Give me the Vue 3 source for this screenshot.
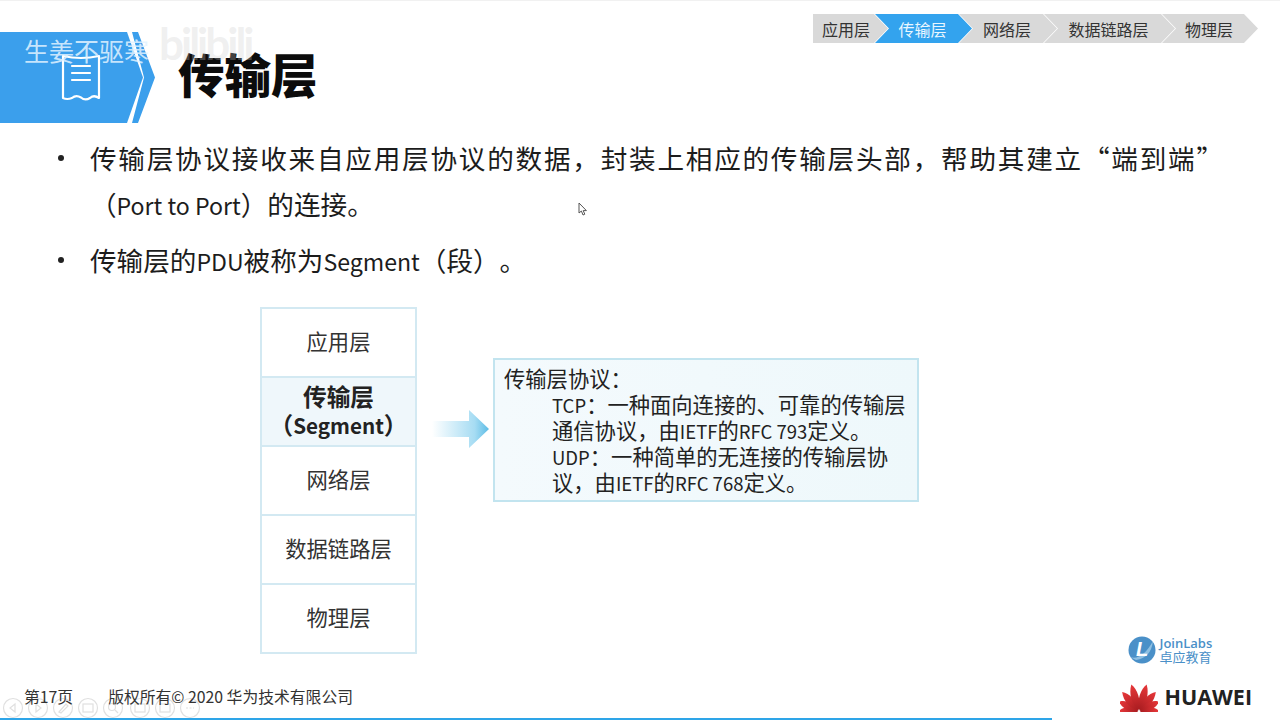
<script setup>
const crumbs = [
  { label: '应用层', w: 75 },
  { label: '传输层', w: 97, active: true },
  { label: '网络层', w: 98 },
  { label: '数据链路层', w: 131 },
  { label: '物理层', w: 96 }
]
const layers = [
  { label: '应用层' },
  { label: '传输层', sub: 'Segment', active: true },
  { label: '网络层' },
  { label: '数据链路层' },
  { label: '物理层' }
]
const petals = [
  { a: -84, s: 0.72 },
  { a: -60, s: 0.8 },
  { a: -37, s: 0.92 },
  { a: -12, s: 1 },
  { a: 12, s: 1 },
  { a: 37, s: 0.92 },
  { a: 60, s: 0.8 },
  { a: 84, s: 0.72 }
]
const controls = [13, 38, 63, 88, 113, 140, 165, 190]
</script>

<template>
  <div class="slide">
    <nav class="crumbs">
      <span
        v-for="(c, i) in crumbs"
        :key="c.label"
        class="crumb"
        :class="{ on: c.active, first: i === 0 }"
        :style="{ width: c.w + 'px', zIndex: 10 - i }"
      >{{ c.label }}</span>
    </nav>

    <header class="head">
      <div class="banner">
        <div class="plate">
          <svg width="40" height="47" viewBox="0 0 40 47" fill="none" stroke="#fff" stroke-width="2.2" stroke-linejoin="round" stroke-linecap="round">
            <path d="M2 2 Q20 6 38 2 V44 Q33 40.5 29 44 Q24 47 20 43.5 Q15 40.5 11 44 Q6 46 2 44 Z" />
            <path d="M11 12H29M11 19H29M11 26H29" />
          </svg>
        </div>
        <div class="stripe"></div>
      </div>
      <h1>传输层</h1>
    </header>
    <span class="mark">生姜不驱寒</span>
    <span class="bili">bilibili</span>

    <ul class="points">
      <li>传输层协议接收来自应用层协议的数据，封装上相应的传输层头部，帮助其建立“端到端”<wbr />（<span class="lat">Port to Port</span>）的连接。</li>
      <li>传输层的<span class="lat">PDU</span>被称为<span class="lat">Segment</span>（段）。</li>
    </ul>

    <section class="diagram">
      <div class="stack">
        <div v-for="l in layers" :key="l.label" class="layer" :class="{ on: l.active }">
          <span>{{ l.label }}</span>
          <span v-if="l.sub" class="sub">（<span class="lat">{{ l.sub }}</span>）</span>
        </div>
      </div>
      <div class="arrow">
        <svg width="58" height="38" viewBox="0 0 58 38">
          <defs>
            <linearGradient id="ag" x1="0" x2="1" y1="0" y2="0">
              <stop offset="0" stop-color="#fff" />
              <stop offset="0.75" stop-color="#a6dcf3" />
              <stop offset="1" stop-color="#5cbce6" />
            </linearGradient>
          </defs>
          <path d="M0 11H37V0L57 19L37 38V27H0Z" fill="url(#ag)" />
        </svg>
      </div>
      <div class="info">
        <p>传输层协议：</p>
        <div class="indent">
          <p><span class="lat">TCP</span>：一种面向连接的、可靠的传输层通信协议，由<span class="lat">IETF</span>的<span class="lat">RFC 793</span>定义。</p>
          <p><span class="lat">UDP</span>：一种简单的无连接的传输层协议，由<span class="lat">IETF</span>的<span class="lat">RFC 768</span>定义。</p>
        </div>
      </div>
    </section>

    <svg class="cursor" width="10" height="14" viewBox="0 0 10 14">
      <path d="M1 1V11L3.4 9L5 13L6.8 12.2L5.2 8.6H8.4Z" fill="#fff" stroke="#555" stroke-width="1" />
    </svg>

    <svg class="controls" width="204" height="24" viewBox="0 0 204 24" fill="none" stroke="#e0e0e0" stroke-width="1.2">
      <circle v-for="x in controls" :key="x" :cx="x" cy="12" r="9.5" />
      <path d="M15 8L10 12L15 16Z" />
      <path d="M36 8L41 12L36 16Z" />
      <path d="M59 16L66 8L68 10L61 17Z" />
      <rect x="83" y="8" width="10" height="8" />
      <circle cx="112" cy="11" r="3.5" />
      <path d="M115 14L118 17" />
      <rect x="135" y="8" width="10" height="8" />
      <rect x="160" y="8" width="10" height="8" />
      <path d="M186 12H194" stroke-dasharray="2 1.5" />
    </svg>

    <footer class="foot">
      <div class="legal">
        <span class="page">第17页</span>
        <span>版权所有© 2020 华为技术有限公司</span>
      </div>
      <div class="logos">
        <div class="join">
          <svg width="28" height="28" viewBox="0 0 28 28">
            <circle cx="14" cy="14" r="13.5" fill="#4a90c8" />
            <path d="M2 21 Q14 25 25 5 Q23 22 8 24Z" fill="#8fc0e2" />
            <text x="14" y="20" text-anchor="middle" class="ltr">L</text>
          </svg>
          <div class="jointxt">
            <b>JoinLabs</b>
            <span>卓应教育</span>
          </div>
        </div>
        <div class="hw">
          <svg width="38" height="30" viewBox="0 0 38 30">
            <defs>
              <linearGradient id="pg" x1="0" x2="0" y1="1" y2="0">
                <stop offset="0" stop-color="#a81c20" />
                <stop offset="1" stop-color="#e8383a" />
              </linearGradient>
            </defs>
            <path
              v-for="p in petals"
              :key="p.a"
              fill="url(#pg)"
              d="M0 -1C-6 -8 -6.5 -19 -2 -27.5C3 -22 4.5 -10 0 -1Z"
              :transform="`translate(19 29) rotate(${p.a}) scale(${p.a < 0 ? 1 : -1} ${p.s}) `"
            />
          </svg>
          <span>HUAWEI</span>
        </div>
      </div>
    </footer>
    <div class="bar"></div>
  </div>
</template>

<style>
html, body { margin: 0; background: #fff; }
</style>

<style scoped>
.slide {
  position: relative;
  width: 1280px;
  height: 720px;
  overflow: hidden;
  background: #fff;
  border-top: 1px solid #f1f1f1;
  box-sizing: border-box;
  color: #1c1c1c;
  font-family: "Noto Sans CJK SC", "Open Sans", sans-serif;
  text-spacing-trim: space-all;
}
.lat {
  font-size: 0.87em;
  line-height: 1;
}
.crumbs {
  display: flex;
  justify-content: flex-end;
  padding: 13px 22px 0 0;
  height: 29px;
}
.crumb {
  position: relative;
  display: flex;
  align-items: center;
  justify-content: center;
  box-sizing: border-box;
  height: 29px;
  margin-left: -13px;
  padding: 0 6px 0 4px;
  font-size: 16px;
  color: #333;
  background: #d9d9d9;
  clip-path: polygon(0 0, calc(100% - 14px) 0, 100% 50%, calc(100% - 14px) 100%, 0 100%, 14px 50%);
}
.crumb.first {
  margin-left: 0;
  padding: 0 9px 0 0;
  clip-path: polygon(0 0, calc(100% - 14px) 0, 100% 50%, calc(100% - 14px) 100%, 0 100%);
}
.crumb.on {
  background: #33a3ee;
  color: #e9f6ff;
}
.head {
  display: flex;
  align-items: center;
  gap: 23px;
  margin-top: -11px;
  height: 91px;
}
.banner {
  display: flex;
  height: 91px;
}
.plate {
  display: flex;
  align-items: flex-start;
  width: 143px;
  box-sizing: border-box;
  padding: 22px 0 0 61px;
  background: #3b9fec;
  clip-path: polygon(0 0, 127px 0, 100% 50%, 127px 100%, 0 100%);
}
.stripe {
  width: 23px;
  margin-left: -11px;
  background: #3b9fec;
  clip-path: polygon(0 0, 6px 0, 100% 50%, 6px 100%, 0 100%, 12px 50%);
}
h1 {
  margin: -10px 0 0;
  font-size: 46.5px;
  line-height: 56px;
  font-weight: 900;
  color: #0c0c0c;
}
.mark {
  position: absolute;
  left: 24px;
  top: 32px;
  font-size: 25px;
  line-height: 34px;
  color: rgba(226, 243, 255, 0.85);
}
.bili {
  position: absolute;
  left: 159px;
  top: 14px;
  font-family: "Lato", sans-serif;
  font-size: 44px;
  line-height: 56px;
  font-weight: 700;
  letter-spacing: -3px;
  color: rgba(205, 205, 205, 0.3);
}
.points {
  margin: 12px 0 0;
  padding: 0 57px 0 90px;
  list-style: none;
  font-size: 26.6px;
  line-height: 46px;
  text-align: justify;
}
.points li {
  position: relative;
  margin-bottom: 10px;
}
.points li::before {
  content: "";
  position: absolute;
  left: -32px;
  top: 20px;
  width: 6px;
  height: 6px;
  border-radius: 50%;
  background: #222;
}
.diagram {
  display: flex;
  align-items: flex-start;
  margin: 24px 0 0 260px;
}
.stack {
  width: 157px;
  box-sizing: border-box;
  border: 2px solid #d3e9f2;
}
.layer {
  display: flex;
  flex-direction: column;
  align-items: center;
  justify-content: center;
  height: 64px;
  padding-bottom: 3px;
  border-top: 2px solid #d3e9f2;
  font-size: 21.3px;
  line-height: 28px;
  color: #333;
}
.layer:first-child {
  border-top: 0;
}
.layer.on {
  background: #eff7fb;
  font-weight: 700;
  font-size: 23.7px;
  color: #222;
}
.sub {
  font-size: 23.7px;
  white-space: nowrap;
}
.arrow {
  display: flex;
  margin: 103px 3px 0 15px;
}
.info {
  width: 426px;
  height: 144px;
  margin-top: 51px;
  box-sizing: border-box;
  padding: 5px 11px 0 9px;
  border: 2px solid #c2e4ef;
  background: linear-gradient(90deg, #f4fafd, #eef8fb);
  font-size: 21.3px;
  line-height: 26px;
  color: #222;
}
.info p {
  margin: 0;
}
.indent {
  padding-left: 48px;
}
.cursor {
  position: absolute;
  left: 578px;
  top: 201px;
}
.controls {
  position: absolute;
  left: 0;
  top: 695px;
}
.foot {
  position: absolute;
  left: 0;
  right: 0;
  bottom: 2px;
  display: flex;
  justify-content: space-between;
  align-items: flex-end;
  padding: 0 28px 6px 24px;
}
.legal {
  display: flex;
  gap: 35px;
  font-size: 15.8px;
  line-height: 22px;
  color: #333;
  margin-bottom: 4px;
}
.logos {
  display: flex;
  flex-direction: column;
  align-items: flex-start;
  gap: 18px;
}
.join {
  display: flex;
  align-items: center;
  gap: 4px;
  margin-left: 8px;
}
.ltr {
  font: italic 700 20px "Liberation Sans", sans-serif;
  fill: #fff;
}
.jointxt {
  display: flex;
  flex-direction: column;
  color: #4a90c8;
  font-size: 13px;
  line-height: 14px;
}
.jointxt b {
  font-family: "Open Sans", sans-serif;
  font-weight: 600;
}
.hw {
  display: flex;
  align-items: center;
  gap: 7px;
  font-family: "Open Sans", sans-serif;
  font-size: 21.5px;
  font-weight: 700;
  color: #222;
  line-height: 26px;
}
.bar {
  position: absolute;
  left: 0;
  bottom: 0;
  width: 1052px;
  height: 2px;
  background: #2ea5e8;
}
</style>
